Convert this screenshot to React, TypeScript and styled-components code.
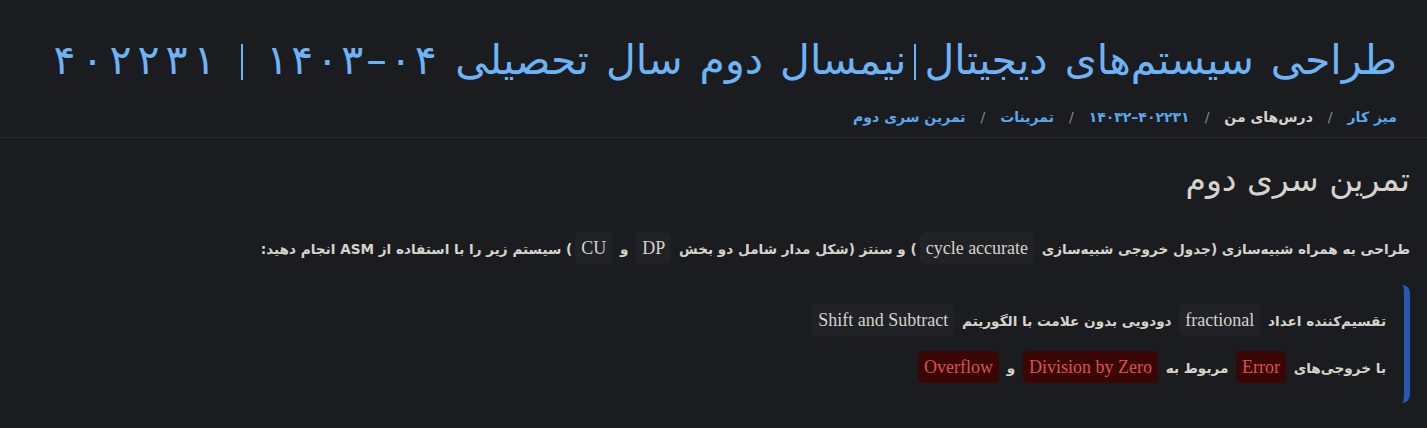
import React from 'react';
import styled, { createGlobalStyle } from 'styled-components';

const GlobalStyle = createGlobalStyle`
  html, body {
    margin: 0;
    padding: 0;
    background: #1b1c1f;
  }
  body {
    direction: rtl;
    font-family: "DejaVu Sans", "Noto Sans", sans-serif;
    color: #d6d2cc;
  }
`;

const Header = styled.header`
  padding: 29px 30px 0 30px;
  border-bottom: 1px solid #2a2b2e;
`;

const Title = styled.h1`
  margin: 0;
  font-size: 41px;
  font-weight: 400;
  line-height: 62px;
  word-spacing: 4px;
  color: #6db4f7;
  white-space: nowrap;
`;

const Sep = styled.span<{ $gap: number }>`
  display: inline-block;
  width: 2px;
  height: 36px;
  background: #6db4f7;
  margin: 0 ${(p) => p.$gap}px;
  vertical-align: -6px;
`;

const Ltr = styled.span`
  direction: ltr;
  unicode-bidi: isolate;
`;

const Digit = styled.span<{ $spread: number }>`
  display: inline-block;
  margin: 0 ${(p) => p.$spread / 2}px;
`;

function Spread({ text, spread }: { text: string; spread: number }) {
  return (
    <Ltr>
      {Array.from(text).map((ch, i) => (
        <Digit key={i} $spread={spread}>{ch}</Digit>
      ))}
    </Ltr>
  );
}

const Crumbs = styled.nav`
  display: flex;
  align-items: center;
  gap: 15px;
  padding: 16px 0 10px 0;
  font-size: 14px;
  font-weight: 700;
  line-height: 20px;
`;

const Crumb = styled.a<{ $muted?: boolean }>`
  color: ${(p) => (p.$muted ? '#d6d2cc' : '#5aa9f0')};
  text-decoration: none;
`;

const Slash = styled.span`
  color: #8c8a86;
  font-weight: 400;
`;

const Main = styled.main`
  padding: 22px 17px 0 17px;
`;

const Heading = styled.h2`
  margin: 0 0 30px 0;
  font-size: 33px;
  font-weight: 400;
  line-height: 40px;
  color: #d6d2cc;
`;

const Para = styled.p`
  margin: 0 0 18px 0;
  font-size: 13.6px;
  font-weight: 700;
  line-height: 36px;
  color: #d6d2cc;
`;

const Code = styled.code<{ $danger?: boolean }>`
  font-family: "Liberation Serif", serif;
  font-size: 18px;
  font-weight: 400;
  padding: 6px 6px;
  margin: 0 3px;
  border-radius: 5px;
  background: ${(p) => (p.$danger ? '#3a0505' : '#202226')};
  color: ${(p) => (p.$danger ? '#d9534f' : '#d6d2cc')};
`;

const Quote = styled.blockquote`
  margin: 0;
  padding: 12px 18px 12px 0;
  border-right: 6px solid #2b56b0;
  border-radius: 8px;
`;

const QuoteLine = styled.p`
  margin: 0;
  font-size: 13.6px;
  font-weight: 700;
  line-height: 46px;
  color: #d6d2cc;
`;

export default function App() {
  return (
    <>
      <GlobalStyle />
      <Header>
        <Title>
          طراحی سیستم‌های دیجیتال<Sep $gap={8} />نیمسال دوم سال تحصیلی <Spread text="۱۴۰۳–۰۴" spread={3} /><Sep $gap={22} /><Spread text="۴۰۲۲۳۱" spread={6} />
        </Title>
        <Crumbs>
          <Crumb href="#">میز کار</Crumb>
          <Slash>/</Slash>
          <Crumb $muted>درس‌های من</Crumb>
          <Slash>/</Slash>
          <Crumb href="#"><Ltr>۱۴۰۳۲–۴۰۲۲۳۱</Ltr></Crumb>
          <Slash>/</Slash>
          <Crumb href="#">تمرینات</Crumb>
          <Slash>/</Slash>
          <Crumb href="#">تمرین سری دوم</Crumb>
        </Crumbs>
      </Header>
      <Main>
        <Heading>تمرین سری دوم</Heading>
        <Para>
          طراحی به همراه شبیه‌سازی (جدول خروجی شبیه‌سازی <Code>cycle accurate</Code>) و سنتز (شکل مدار شامل دو بخش <Code>DP</Code> و <Code>CU</Code>) سیستم زیر را با استفاده از ASM انجام دهید:
        </Para>
        <Quote>
          <QuoteLine>
            تقسیم‌کننده اعداد <Code>fractional</Code> دودویی بدون علامت با الگوریتم <Code>Shift and Subtract</Code>
          </QuoteLine>
          <QuoteLine>
            با خروجی‌های <Code $danger>Error</Code> مربوط به <Code $danger>Division by Zero</Code> و <Code $danger>Overflow</Code>
          </QuoteLine>
        </Quote>
      </Main>
    </>
  );
}
